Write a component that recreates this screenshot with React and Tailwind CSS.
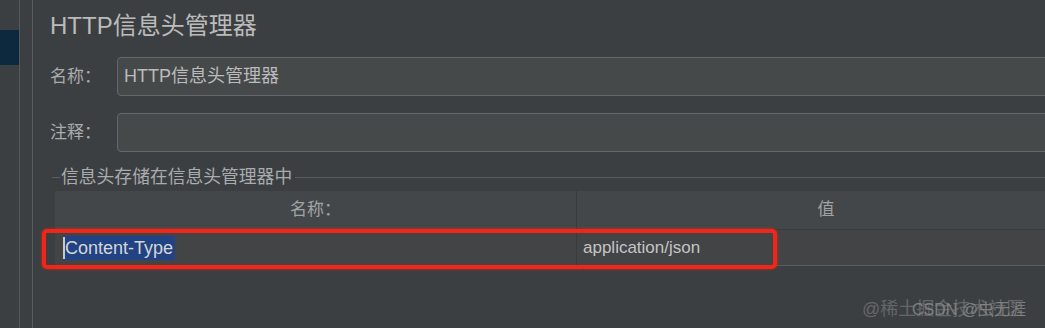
import React from "react";

const F = { fontFamily: '"Liberation Sans", "Noto Sans CJK SC", sans-serif' };

export default function App() {
  return (
    <div
      className="relative flex w-[1045px] h-[328px] overflow-hidden bg-[#3c3f41] text-[#bbbbbb]"
      style={F}
    >
      {/* left tree strip */}
      <div className="w-[19px] shrink-0 flex flex-col">
        <div className="mt-[30px] h-[35px] bg-[#0d293e]" />
      </div>
      <div className="w-px shrink-0 bg-[#56595b]" />
      <div className="w-[12px] shrink-0 bg-[#3c3f41]" />
      <div className="w-px shrink-0 bg-[#595c5e]" />

      {/* main panel */}
      <div className="flex-1 min-w-0 flex flex-col pl-[17px]">
        <div className="mt-[12px] h-[28px] leading-[28px] text-[24px] text-[#bbbbbb] whitespace-nowrap">
          HTTP信息头管理器
        </div>

        <div className="mt-[17px] flex items-center h-[39px]">
          <div className="w-[67px] shrink-0 text-[17px] text-[#a9acae]">名称：</div>
          <div className="flex-1 h-[39px] -mr-[6px] rounded-[4px] border border-[#65686a] bg-[#45494a] flex items-center pl-[6px] text-[18px] text-[#bbbbbb] whitespace-nowrap">
            HTTP信息头管理器
          </div>
        </div>

        <div className="mt-[17px] flex items-center h-[39px]">
          <div className="w-[67px] shrink-0 text-[17px] text-[#a9acae]">注释：</div>
          <div className="flex-1 h-[39px] -mr-[6px] rounded-[4px] border border-[#65686a] bg-[#45494a]" />
        </div>

        {/* group title */}
        <div className="mt-[14px] flex items-center h-[22px] pl-[2px]">
          <div className="w-[8px] h-px bg-[#5a5d5f]" />
          <div className="px-[1px] text-[17.8px] leading-[22px] text-[#a9acae] whitespace-nowrap">
            信息头存储在信息头管理器中
          </div>
          <div className="flex-1 h-px bg-[#5a5d5f] ml-[2px]" />
        </div>

        {/* table */}
        <div className="mt-[3px] ml-[5px] -mr-[30px] flex flex-col">
          <div className="flex h-[39px] bg-[#444749] border-b border-[#393b3d]">
            <div className="w-[522px] shrink-0 flex items-center justify-center text-[17px] text-[#a0a3a5] border-r border-[#393b3d]">
              名称：
            </div>
            <div className="flex-1 flex items-center justify-center text-[17px] text-[#a0a3a5]">
              值
            </div>
          </div>
          <div className="flex h-[36px] bg-[#424446] border-b border-[#5b5e60]">
            <div className="w-[522px] shrink-0 flex items-center pl-[8px] border-r border-[#393b3d]">
              <div className="w-[2px] h-[22px] bg-[#c8c8c8]" />
              <div className="h-[24px] leading-[24px] pr-[2px] bg-[#214283] text-[18px] text-[#d6d6d6] whitespace-nowrap">
                Content-Type
              </div>
            </div>
            <div className="flex-1 flex items-center pl-[6px] text-[17px] text-[#c4c4c4] whitespace-nowrap">
              application/json
            </div>
          </div>
        </div>
      </div>

      {/* red annotation box */}
      <div className="absolute left-[42px] top-[229px] w-[735px] h-[40px] rounded-[5px] border-[4px] border-[#f22518] shadow-[0_0_3px_rgba(255,40,20,0.7)]" />

      {/* watermark */}
      <div className="absolute left-[862px] top-[297px] text-[18px] leading-[24px] text-[#6f7173] whitespace-nowrap opacity-80">
        @稀土掘金技术社区
      </div>
      <div className="absolute left-[912px] top-[299px] text-[16px] leading-[22px] text-[#8a8c8e] whitespace-nowrap opacity-80">
        CSDN @虫无涯
      </div>
    </div>
  );
}
